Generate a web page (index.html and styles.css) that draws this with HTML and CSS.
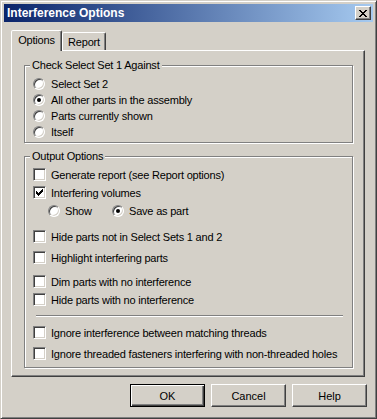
FILE: index.html
```html
<!DOCTYPE html>
<html lang="en">
<head>
    <meta charset="UTF-8">
    <title>Interference Options</title>
    <link rel="stylesheet" href="styles.css">
</head>
<body>

<div class="window">
    <div class="titlebar">
        <span class="title">Interference Options</span>
        <button class="close-btn" aria-label="Close">
            <svg width="8" height="7" viewBox="0 0 8 7" shape-rendering="crispEdges">
                <path d="M0 0h2v1h-2z M6 0h2v1h-2z M1 1h2v1h-2z M5 1h2v1h-2z M2 2h4v1h-4z M3 3h2v1h-2z M2 4h4v1h-4z M1 5h2v1h-2z M5 5h2v1h-2z M0 6h2v1h-2z M6 6h2v1h-2z" fill="#000"/>
            </svg>
        </button>
    </div>

    <div class="tabs">
        <div class="tab active">Options</div>
        <div class="tab">Report</div>
    </div>

    <div class="panel">
        <div class="group group-check">
            <span class="group-title">Check Select Set 1 Against</span>
            <div class="opt"><span class="radio"></span>Select Set 2</div>
            <div class="opt"><span class="radio on"></span>All other parts in the assembly</div>
            <div class="opt"><span class="radio"></span>Parts currently shown</div>
            <div class="opt"><span class="radio"></span>Itself</div>
        </div>

        <div class="group group-output">
            <span class="group-title">Output Options</span>
            <div class="opt"><span class="check"></span>Generate report (see Report options)</div>
            <div class="opt mt1"><span class="check on"><svg width="7" height="7" viewBox="0 0 7 7" shape-rendering="crispEdges"><path d="M0 2H1V3H2V4H3V3H4V2H5V1H6V0H7V3H6V4H5V5H4V6H3V7H2V6H1V5H0Z" fill="#000"/></svg></span>Interfering volumes</div>
            <div class="sub mt1">
                <div class="opt show"><span class="radio"></span>Show</div>
                <div class="opt"><span class="radio on"></span>Save as part</div>
            </div>
            <div class="opt mt9"><span class="check"></span>Hide parts not in Select Sets 1 and 2</div>
            <div class="opt mt4"><span class="check"></span>Highlight interfering parts</div>
            <div class="opt mt7"><span class="check"></span>Dim parts with no interference</div>
            <div class="opt mt1"><span class="check"></span>Hide parts with no interference</div>
            <div class="separator"></div>
            <div class="opt"><span class="check"></span>Ignore interference between matching threads</div>
            <div class="opt mt4"><span class="check"></span>Ignore threaded fasteners interfering with non-threaded holes</div>
        </div>
    </div>

    <div class="buttons">
        <button class="btn default">OK</button>
        <button class="btn">Cancel</button>
        <button class="btn">Help</button>
    </div>
</div>

</body>
</html>
```

FILE: styles.css
```css
body {
    margin: 0;
    background-color: #d4d0c8;
    font-family: "Liberation Sans", Arial, sans-serif;
    font-size: 11px;
    letter-spacing: -0.2px;
    color: #000;
}

/* Fensterrahmen, klassischer 3D-Look */
.window {
    width: 377px;
    height: 419px;
    box-sizing: border-box;
    border: 1px solid;
    border-color: #d4d0c8 #404040 #404040 #d4d0c8;
    box-shadow: inset 1px 1px 0 #fff, inset -1px -1px 0 #808080;
    padding: 3px;
    display: flex;
    flex-direction: column;
}

.titlebar {
    height: 18px;
    flex: none;
    display: flex;
    align-items: center;
    padding-left: 3px;
    background: linear-gradient(to right, #0a246a, #a6caf0);
}
.title {
    color: #fff;
    font-weight: bold;
    font-size: 12px;
    letter-spacing: 0;
}
.close-btn {
    margin-left: auto;
    margin-right: 2px;
    width: 16px;
    height: 14px;
    padding: 0;
    box-sizing: border-box;
    border: 1px solid;
    border-color: #fff #404040 #404040 #fff;
    box-shadow: inset -1px -1px 0 #808080;
    background-color: #d4d0c8;
    display: flex;
    align-items: center;
    justify-content: center;
}

/* Reiter */
.tabs {
    flex: none;
    display: flex;
    align-items: flex-end;
    height: 20px;
    margin-top: 8px;
    padding-left: 7px;
}
.tab {
    box-sizing: border-box;
    height: 18px;
    border: 1px solid;
    border-bottom: none;
    border-color: #fff #404040 transparent #fff;
    box-shadow: inset -1px 0 0 #808080;
    border-radius: 2px 2px 0 0;
    background-color: #d4d0c8;
    display: flex;
    align-items: center;
    justify-content: center;
    width: 44px;
}
.tab.active {
    width: 51px;
    height: 21px;
    margin-bottom: -1px;
    padding-bottom: 2px;
    position: relative;
    z-index: 1;
}

.panel {
    flex: none;
    width: 354px;
    height: 327px;
    box-sizing: border-box;
    margin-left: 7px;
    border: 1px solid;
    border-color: #fff #404040 #404040 #fff;
    box-shadow: inset -1px -1px 0 #808080;
    padding: 14px 11px 0 12px;
}

/* Gruppenrahmen (geätzt) */
.group {
    position: relative;
    border: 1px solid #808080;
    box-shadow: inset 1px 1px 0 #fff, 1px 1px 0 #fff;
    padding-left: 8px;
}
.group-title {
    position: absolute;
    top: -7px;
    left: 5px;
    padding: 0 2px;
    line-height: 13px;
    background-color: #d4d0c8;
}
.group-check {
    padding-top: 10px;
    padding-bottom: 2px;
}
.group-output {
    margin-top: 13px;
    padding-top: 9px;
    padding-bottom: 5px;
}

.opt {
    display: flex;
    align-items: center;
    height: 17px;
    white-space: nowrap;
}
.group-check .opt {
    height: 16px;
}
.mt1 { margin-top: 1px; }
.mt4 { margin-top: 4px; }
.mt7 { margin-top: 7px; }
.mt9 { margin-top: 9px; }

.sub {
    display: flex;
    margin-left: 15px;
}
.sub .show {
    width: 64px;
}
.sub .radio {
    margin-right: 5px;
}

.separator {
    height: 0;
    border-top: 1px solid #808080;
    border-bottom: 1px solid #fff;
    margin: 7px 9px 7px 3px;
}

.check {
    flex: none;
    width: 13px;
    height: 13px;
    box-sizing: border-box;
    border: 1px solid;
    border-color: #808080 #fff #fff #808080;
    box-shadow: inset 1px 1px 0 #404040, inset -1px -1px 0 #d4d0c8;
    background-color: #fff;
    margin-right: 5px;
    display: flex;
    align-items: center;
    justify-content: center;
}

.radio {
    flex: none;
    width: 12px;
    height: 12px;
    box-sizing: border-box;
    border-radius: 50%;
    border: 1px solid;
    border-color: #808080 #fff #fff #808080;
    box-shadow: inset 1px 1px 0 #404040, inset -1px -1px 0 #d4d0c8;
    background-color: #fff;
    margin-right: 6px;
    display: flex;
    align-items: center;
    justify-content: center;
}
.radio.on::after {
    content: "";
    width: 4px;
    height: 4px;
    border-radius: 50%;
    background-color: #000;
}

/* Schaltflächen unten */
.buttons {
    flex: none;
    display: flex;
    justify-content: flex-end;
    gap: 6px;
    margin-top: 7px;
    padding-right: 6px;
}
.btn {
    width: 75px;
    height: 23px;
    box-sizing: border-box;
    padding: 0;
    font: inherit;
    color: #000;
    background-color: #d4d0c8;
    border: 1px solid;
    border-color: #fff #404040 #404040 #fff;
    box-shadow: inset -1px -1px 0 #808080;
}
.btn.default {
    border-color: #000;
    box-shadow: inset 1px 1px 0 #fff, inset -1px -1px 0 #404040, inset -2px -2px 0 #808080;
}
```
